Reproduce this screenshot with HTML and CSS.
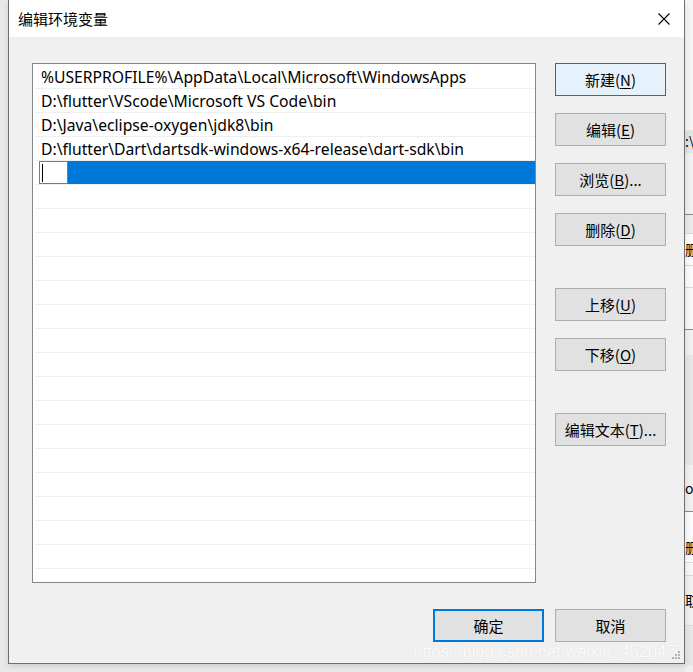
FILE: index.html
```html
<!DOCTYPE html>
<html lang="zh-CN">
<head>
<meta charset="utf-8">
<title>编辑环境变量</title>
<link rel="stylesheet" href="styles.css">
</head>
<body>
<div class="screen">
  <div class="dialog">
    <div class="titlebar">
      <span class="title">编辑环境变量</span>
      <svg class="close" width="12" height="12" viewBox="0 0 12 12"><path d="M0.5 0.5 L11.5 11.5 M11.5 0.5 L0.5 11.5" stroke="#000" stroke-width="1.1" fill="none"/></svg>
    </div>
    <div class="content">
      <div class="main">
        <div class="list">
          <div class="row">%USERPROFILE%\AppData\Local\Microsoft\WindowsApps</div>
          <div class="row">D:\flutter\VScode\Microsoft VS Code\bin</div>
          <div class="row">D:\Java\eclipse-oxygen\jdk8\bin</div>
          <div class="row">D:\flutter\Dart\dartsdk-windows-x64-release\dart-sdk\bin</div>
          <div class="row row-sel"><span class="pad"></span><span class="editbox"><span class="caret"></span></span><span class="selfill"></span></div>
          <div class="row"></div><div class="row"></div><div class="row"></div><div class="row"></div>
          <div class="row"></div><div class="row"></div><div class="row"></div><div class="row"></div>
          <div class="row"></div><div class="row"></div><div class="row"></div><div class="row"></div>
          <div class="row"></div><div class="row"></div><div class="row"></div><div class="row"></div>
        </div>
        <div class="side">
          <div class="group">
            <button class="btn btn-focus">新建(<u>N</u>)</button>
            <button class="btn">编辑(<u>E</u>)</button>
            <button class="btn">浏览(<u>B</u>)...</button>
            <button class="btn">删除(<u>D</u>)</button>
          </div>
          <div class="group group-mid">
            <button class="btn">上移(<u>U</u>)</button>
            <button class="btn">下移(<u>O</u>)</button>
          </div>
          <div class="group group-last">
            <button class="btn">编辑文本(<u>T</u>)...</button>
          </div>
        </div>
      </div>
      <div class="footer">
        <button class="btn btn-default">确定</button>
        <button class="btn">取消</button>
      </div>
    </div>
    <div class="watermark">https://blog.csdn.net/weixin_45204777</div>
    <svg class="grip" width="10" height="10" viewBox="0 0 10 10" fill="#b4b4b4"><rect x="7" y="1" width="2" height="2"/><rect x="4" y="4" width="2" height="2"/><rect x="7" y="4" width="2" height="2"/><rect x="1" y="7" width="2" height="2"/><rect x="4" y="7" width="2" height="2"/><rect x="7" y="7" width="2" height="2"/></svg>
  </div>
  <div class="behind">
    <div class="b b1"></div>
    <div class="b b2">:\</div>
    <div class="b b3"></div>
    <div class="b b4"></div>
    <div class="b b5">删</div>
    <div class="b b6"></div>
    <div class="b b7"></div>
    <div class="b b8"></div>
    <div class="b b9"></div>
    <div class="b b10">or</div>
    <div class="b b11"></div>
    <div class="b b12">删</div>
    <div class="b b13"></div>
    <div class="b b14">取</div>
    <div class="b b15"></div>
  </div>
</div>
</body>
</html>
```

FILE: styles.css
```css
html, body {
  margin: 0;
  padding: 0;
}
body {
  background: #e9e9e9;
  width: 693px;
  height: 672px;
  overflow: hidden;
  font-family: "Noto Sans", "Noto Sans CJK SC", sans-serif;
}
.screen {
  display: flex;
  align-items: flex-start;
  padding-left: 8px;
}
.dialog {
  position: relative;
  width: 675px;
  height: 663px;
  border: 1px solid #6e6e6e;
  border-top: none;
  background: #f0f0f0;
  box-shadow: 0 2px 6px rgba(0,0,0,0.12);
  display: flex;
  flex-direction: column;
  z-index: 1;
}
.titlebar {
  height: 37px;
  background: #fff;
  display: flex;
  align-items: center;
  justify-content: space-between;
  padding: 0 14px 0 9px;
  flex-shrink: 0;
}
.title {
  font-family: "Noto Sans CJK SC", sans-serif;
  font-size: 15px;
  color: #000;
}
.close {
  display: block;
}
.content {
  flex: 1;
  display: flex;
  flex-direction: column;
  padding: 26px 18px 0 23px;
}
.main {
  display: flex;
  gap: 19px;
}
.list {
  width: 501px;
  height: 517px;
  border: 1px solid #828790;
  background: #fff;
  padding: 1px 0 0 1px;
  box-sizing: content-box;
  overflow: hidden;
}
.row {
  height: 23px;
  border-bottom: 1px solid #efefef;
  margin-left: 1px;
  padding-left: 6px;
  font-size: 15.7px;
  line-height: 25px;
  color: #000;
  white-space: nowrap;
}
.row-sel {
  display: flex;
  padding-left: 0;
}
.pad {
  width: 4px;
  background: #fff;
}
.editbox {
  width: 27px;
  height: 21px;
  border: 1px solid #7a7a7a;
  background: #fff;
  position: relative;
  display: block;
}
.caret {
  position: absolute;
  left: 2px;
  top: 2px;
  width: 1px;
  height: 18px;
  background: #000;
}
.selfill {
  flex: 1;
  background: #0078d7;
}
.side {
  display: flex;
  flex-direction: column;
  width: 111px;
}
.group {
  display: flex;
  flex-direction: column;
  gap: 17px;
}
.group-mid {
  margin-top: 42px;
}
.group-last {
  margin-top: 42px;
}
.btn {
  width: 111px;
  height: 33px;
  box-sizing: border-box;
  border: 1px solid #adadad;
  background: #e1e1e1;
  font-family: "Noto Sans CJK SC", sans-serif;
  font-size: 15px;
  color: #000;
  padding: 0;
  margin: 0;
  line-height: 31px;
  text-align: center;
}
.btn u {
  text-underline-offset: 2px;
}
.btn-focus {
  background: #e5f1fb;
  border-color: #0078d7;
}
.btn-default {
  border: 2px solid #0078d7;
  line-height: 29px;
}
.footer {
  display: flex;
  justify-content: flex-end;
  gap: 11px;
  margin-top: 26px;
}
.watermark {
  position: absolute;
  left: 404px;
  top: 642px;
  font-family: "Liberation Sans", Arial, sans-serif;
  font-size: 16.5px;
  line-height: 19px;
  color: #fbfbfb;
  text-shadow: 0 0 1px #d6d6d6;
  white-space: nowrap;
  width: 271px;
  overflow: hidden;
}
.grip {
  position: absolute;
  right: 3px;
  bottom: 3px;
}
.behind {
  width: 8px;
  height: 672px;
  display: flex;
  flex-direction: column;
  background: #f0f0f0;
  font-family: "Noto Sans CJK SC", sans-serif;
  font-size: 14px;
  overflow: hidden;
  color: #000;
  white-space: nowrap;
}
.b { flex-shrink: 0; }
.b1 { height: 130px; background: #f5f5f5; }
.b2 { height: 23px; background: #e3e3e3; line-height: 23px; }
.b3 { height: 61px; background: #f0f0f0; border-bottom: 1px solid #8a8a8a; }
.b4 { height: 18px; background: #eaeaea; border-bottom: 1px solid #d9d9d9; }
.b5 { height: 31px; background: #fbfbfb; line-height: 31px; border-bottom: 1px solid #d9d9d9; }
.b6 { height: 21px; background: #fbfbfb; border-bottom: 1px solid #d9d9d9; }
.b7 { height: 41px; background: #f7f7f7; border-bottom: 1px solid #8a8a8a; }
.b8 { height: 25px; background: #f0f0f0; }
.b9 { height: 110px; background: #e6e6e6; }
.b10 { height: 46px; background: #f0f0f0; line-height: 46px; border-bottom: 1px solid #8a8a8a; }
.b11 { height: 20px; background: #fbfbfb; }
.b12 { height: 30px; background: #fbfbfb; line-height: 30px; border-bottom: 1px solid #d9d9d9; }
.b13 { height: 12px; background: #f7f7f7; border-bottom: 1px solid #d9d9d9; }
.b14 { height: 49px; background: #f0f0f0; line-height: 49px; border-bottom: 1px solid #d9d9d9; }
.b15 { height: 40px; background: #e6e6e6; }
```
